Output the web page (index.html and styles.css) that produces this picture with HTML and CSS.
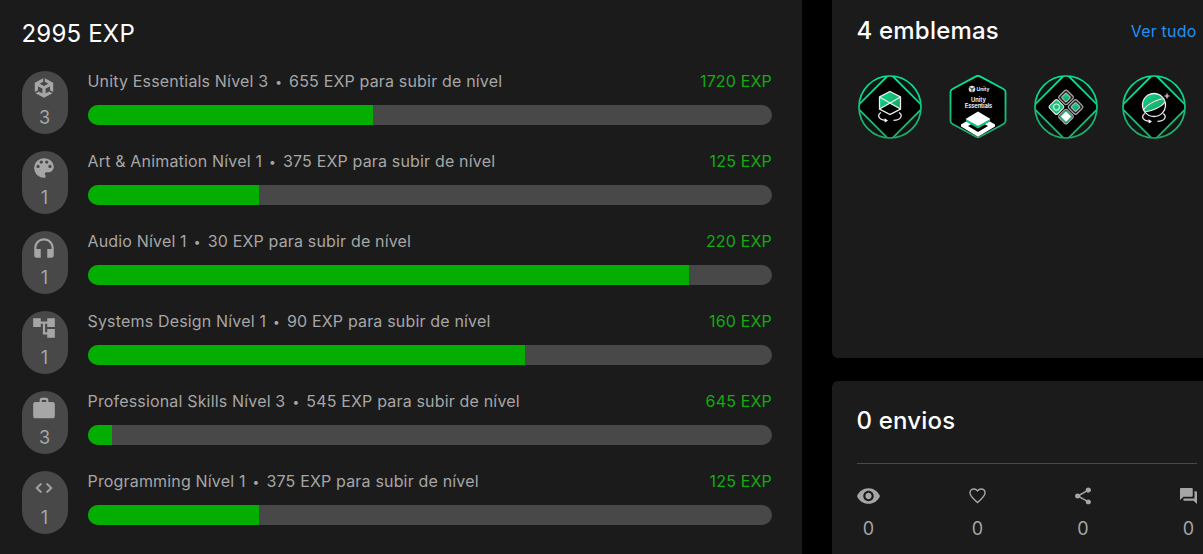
FILE: index.html
```html
<!DOCTYPE html>
<html lang="pt">
<head>
<meta charset="utf-8">
<title>EXP</title>
<link rel="stylesheet" href="styles.css">
</head>
<body>
<svg class="defs" width="0" height="0">
  <defs>
    <linearGradient id="ring" gradientUnits="userSpaceOnUse" x1="0" y1="0" x2="0" y2="64"><stop offset="0" stop-color="#00e896"/><stop offset="1" stop-color="#22a566"/></linearGradient>
    <linearGradient id="fill" x1="0" y1="0" x2="1" y2="1"><stop offset="0" stop-color="#06dc8c"/><stop offset="1" stop-color="#279258"/></linearGradient>
    <clipPath id="disc"><circle cx="32" cy="32" r="31"/></clipPath>
    <g id="frame">
      <circle cx="32" cy="32" r="31" fill="#131414"/>
      <g clip-path="url(#disc)"><path d="M32-1.500 65.500 32 32 65.500-1.500 32Z" fill="#000" stroke="url(#ring)" stroke-width="1.900"/></g>
      <circle cx="32" cy="32" r="31" fill="none" stroke="url(#ring)" stroke-width="1.700"/>
    </g>
    <g id="turn" fill="none" stroke="#e8e8e8" stroke-width="1.3">
      <path d="M23 37.500C19 40 20 44.500 27.500 45.400M41 37.500C45 40 43.500 45 35.500 45.400"/>
      <path d="M26.500 43.300 30 45.500 26.800 47.500Z" fill="#fff" stroke="none"/>
    </g>
    <path id="cube" d="m12.929 4.294 3.800 2.193c.137.077.142.290 0 .367l-4.515 2.608a.419.419 0 0 1-.425 0L7.274 6.854c-.139-.074-.141-.293 0-.367l3.797-2.193V0L1.376 5.598V16.793l3.718-2.146v-4.386c-.002-.156.181-.268.318-.184l4.515 2.608a.425.425 0 0 1 .214.368v5.213c.002.156-.181.268-.318.184l-3.800-2.193-3.718 2.146L12 24l9.695-5.598-3.718-2.146-3.800 2.193c-.134.082-.323-.025-.318-.184V13.053c0-.156.087-.296.214-.368l4.515-2.608c.134-.082.323.022.318.184v4.386l3.718 2.146V5.598L12.929 0Z"/>
  </defs>
</svg>
<main class="page">
  <section class="skills">
    <h2 class="total">2995 EXP</h2>
    <div class="skill">
      <div class="pill"><svg class="icon" viewBox="-3 -4 30 32" preserveAspectRatio="none"><use href="#cube"/></svg><span>3</span></div>
      <div class="info"><div class="line"><span>Unity Essentials Nível 3 <span class="dot">•</span> 655 EXP para subir de nível</span><span class="exp">1720 EXP</span></div><div class="track"><div class="bar" style="width:285px"></div></div></div>
    </div>
    <div class="skill">
      <div class="pill"><svg class="icon" viewBox="0 0 24 24"><path d="M12 3c-4.970 0-9 4.030-9 9s4.030 9 9 9c.83 0 1.500-.67 1.500-1.500 0-.39-.15-.74-.39-1.010-.23-.26-.38-.61-.38-.99 0-.83.67-1.500 1.500-1.500H16c2.760 0 5-2.240 5-5 0-4.420-4.030-8-9-8zm-5.500 9c-.83 0-1.500-.67-1.500-1.500S5.670 9 6.500 9 8 9.670 8 10.500 7.330 12 6.500 12zm3-4C8.670 8 8 7.330 8 6.500S8.670 5 9.500 5s1.500.67 1.500 1.500S10.330 8 9.500 8zm5 0c-.83 0-1.500-.67-1.500-1.500S13.670 5 14.500 5s1.500.67 1.500 1.500S15.330 8 14.500 8zm3 4c-.83 0-1.500-.67-1.500-1.500S16.670 9 17.500 9s1.500.67 1.500 1.500-.67 1.500-1.500 1.500z"/></svg><span>1</span></div>
      <div class="info"><div class="line"><span>Art &amp; Animation Nível 1 <span class="dot">•</span> 375 EXP para subir de nível</span><span class="exp">125 EXP</span></div><div class="track"><div class="bar" style="width:171px"></div></div></div>
    </div>
    <div class="skill">
      <div class="pill"><svg class="icon" viewBox="0 0 24 24"><path d="M12 3c-4.970 0-9 4.030-9 9v7c0 1.100.9 2 2 2h4v-8H5v-1c0-3.870 3.130-7 7-7s7 3.130 7 7v1h-4v8h4c1.100 0 2-.9 2-2v-7c0-4.970-4.030-9-9-9z"/></svg><span>1</span></div>
      <div class="info"><div class="line"><span>Audio Nível 1 <span class="dot">•</span> 30 EXP para subir de nível</span><span class="exp">220 EXP</span></div><div class="track"><div class="bar" style="width:601px"></div></div></div>
    </div>
    <div class="skill">
      <div class="pill"><svg class="icon" viewBox="0 0 24 24"><path d="M22 11V3h-7v3H9V3H2v8h7V8h2v10h4v3h7v-8h-7v3h-2V8h2v3z"/></svg><span>1</span></div>
      <div class="info"><div class="line"><span>Systems Design Nível 1 <span class="dot">•</span> 90 EXP para subir de nível</span><span class="exp">160 EXP</span></div><div class="track"><div class="bar" style="width:437px"></div></div></div>
    </div>
    <div class="skill">
      <div class="pill"><svg class="icon" viewBox="0 -.500 24 24"><path d="M20 6h-4V4c0-1.110-.89-2-2-2h-4c-1.110 0-2 .89-2 2v2H4c-1.110 0-1.990.89-1.990 2L2 19c0 1.110.89 2 2 2h16c1.110 0 2-.89 2-2V8c0-1.110-.89-2-2-2zm-6 0h-4V4h4v2z"/></svg><span>3</span></div>
      <div class="info"><div class="line"><span>Professional Skills Nível 3 <span class="dot">•</span> 545 EXP para subir de nível</span><span class="exp">645 EXP</span></div><div class="track"><div class="bar" style="width:24px"></div></div></div>
    </div>
    <div class="skill">
      <div class="pill"><svg class="icon" viewBox="-3.500 -3.500 31 31"><path d="M9.400 16.600 4.800 12l4.600-4.600L8 6l-6 6 6 6 1.400-1.400zm5.200 0 4.600-4.600-4.600-4.600L16 6l6 6-6 6-1.400-1.400z" stroke="#a6a6a6" stroke-width=".4"/></svg><span>1</span></div>
      <div class="info"><div class="line"><span>Programming Nível 1 <span class="dot">•</span> 375 EXP para subir de nível</span><span class="exp">125 EXP</span></div><div class="track"><div class="bar" style="width:171px"></div></div></div>
    </div>
  </section>
  <aside class="side">
    <section class="card badges-card">
      <header class="head"><h3>4 emblemas</h3><a class="all">Ver tudo</a></header>
      <div class="badges">
        <svg class="badge" viewBox="0 0 64 64"><use href="#frame"/><path d="M32 16.500 42.500 22V34L32 39.500 21.500 34V22Z" fill="url(#fill)"/><path d="M22 34 32 29 42 34 32 39Z" fill="#000"/><path d="M32 16.500 42.500 22V34L32 39.500 21.500 34V22ZM21.500 22 42.500 34M42.500 22 21.500 34" fill="none" stroke="#eee" stroke-width="1.300"/><use href="#turn"/></svg>
        <svg class="badge" viewBox="0 0 64 64"><path d="M32 .8Q33 .8 34 1.400L57.500 14Q59.500 15.200 59.500 17V46Q59.500 48 57.500 49L34 61.800Q32 62.800 30 61.800L6.500 49Q4.500 48 4.500 46V17Q4.500 15.200 6.500 14L30 1.400Q31 .8 32 .8Z" fill="#000" stroke="url(#ring)" stroke-width="1.800"/><path d="M15 49.500 21 46 32 52 43 46 49 49.500V51.500L32 61.800 15 51.500Z" fill="#fff"/><path d="M22 51 32 45.500 42 51 32 57Z" fill="#000"/><path d="M20 44 32 51 44 44V46.500L32 53.500 20 46.500Z" fill="#08c57d"/><path d="M32 36.500 44.500 44 32 51 19.500 44Z" fill="#fff"/><circle cx="26" cy="14" r="3.300" fill="#ddd"/><path d="M26 14V17M26 14 23.500 12.500M26 14 28.500 12.500" stroke="#000" stroke-width=".8"/><text x="30.500" y="15.900" class="mark">Unity</text><text x="32.500" y="27" class="name">Unity</text><text x="32.500" y="33.200" class="name" textLength="27.500">Essentials</text></svg>
        <svg class="badge" viewBox="0 0 64 64"><use href="#frame"/><g transform="translate(32 32) rotate(45)" stroke-width="1.200"><g fill="#222" stroke="#aaa"><rect x="-12.500" y="-12.500" width="11.500" height="11.500" rx="2"/><rect x="1" y="-12.500" width="11.500" height="11.500" rx="2"/><rect x="1" y="1" width="11.500" height="11.500" rx="2"/></g><rect x="-12.500" y="1" width="11.500" height="11.500" rx="2" fill="#1bc17c" stroke="#ddd"/><circle cx="-6.700" cy="6.700" r="3" fill="none" stroke="#d5f5e7"/><rect x="-10" y="-10" width="6.500" height="6.500" rx="1" fill="url(#fill)" stroke="#9bb"/><rect x="3.500" y="-10" width="6.500" height="6.500" rx="1" fill="url(#fill)" stroke="#9bb"/><rect x="2.500" y="2.500" width="8.500" height="8.500" rx="1" fill="#fff" stroke="#27bd7c"/></g></svg>
        <svg class="badge" viewBox="0 0 64 64"><use href="#frame"/><g><circle cx="32" cy="30" r="11.500" fill="#000"/><path d="M21.500 34.500A11.500 11.500 0 0 1 41.500 23.500C36 24 25 28 21.500 34.500Z" fill="url(#fill)"/><path d="M22.500 37C30 36.500 40 31.500 43 27L42 24.500C36 25 25.500 29.500 21.800 34.500Z" fill="url(#fill)"/><path d="M21.500 35C25 29 36 24 41.500 23.800M22.500 37C30 36.500 40 31.500 43 27" fill="none" stroke="#eee" stroke-width="1.200"/><circle cx="32" cy="30" r="11.500" fill="none" stroke="#eee" stroke-width="1.300"/></g><use href="#turn" y="1"/><path d="M45 18.500V23.500M42.500 21H47.500" stroke="#eee" stroke-width="1.100"/></svg>
      </div>
    </section>
    <section class="card sent-card">
      <h3 class="sent">0 envios</h3>
      <div class="stats">
        <div class="stat"><svg width="23" height="18" viewBox="1 3.400 22 17.200" preserveAspectRatio="none"><path d="M12 4.500C7 4.500 2.730 7.610 1 12c1.730 4.390 6 7.500 11 7.500s9.270-3.110 11-7.500c-1.730-4.390-6-7.500-11-7.500zM12 17c-2.760 0-5-2.240-5-5s2.240-5 5-5 5 2.240 5 5-2.240 5-5 5zm0-8c-1.660 0-3 1.340-3 3s1.340 3 3 3 3-1.340 3-3-1.340-3-3-3z"/></svg><span>0</span></div>
        <div class="stat"><svg width="17" height="18" viewBox="0 0 17 18"><path class="outline" d="M8.500 15.500 7.300 14.400C3.100 10.600 1 8.600 1 5.900 1 3.600 2.700 2 4.900 2c1.400 0 2.700.7 3.600 1.900C9.400 2.700 10.700 2 12.100 2 14.300 2 16 3.600 16 5.900c0 2.700-2.100 4.700-6.300 8.500Z"/></svg><span>0</span></div>
        <div class="stat"><svg width="16" height="18" viewBox="3 1.300 18 21.400" preserveAspectRatio="none"><path d="M18 16.080c-.76 0-1.440.3-1.960.77L8.910 12.700c.05-.23.09-.46.09-.7s-.04-.47-.09-.7l7.050-4.110c.54.5 1.250.81 2.040.81 1.660 0 3-1.340 3-3s-1.340-3-3-3-3 1.340-3 3c0 .24.04.47.09.7L8.040 9.810C7.500 9.310 6.790 9 6 9c-1.660 0-3 1.340-3 3s1.340 3 3 3c.79 0 1.500-.31 2.040-.81l7.120 4.160c-.05.21-.08.43-.08.65 0 1.610 1.310 2.920 2.920 2.920 1.610 0 2.920-1.310 2.920-2.920s-1.310-2.920-2.920-2.920z"/></svg><span>0</span></div>
        <div class="stat"><svg width="17" height="18" viewBox="2 .800 20 22.400" preserveAspectRatio="none"><path d="M21 6h-2v9H6v2c0 .55.45 1 1 1h11l4 4V7c0-.55-.45-1-1-1zm-4 6V3c0-.55-.45-1-1-1H3c-.55 0-1 .45-1 1v14l4-4h10c.55 0 1-.45 1-1z"/></svg><span>0</span></div>
      </div>
    </section>
  </aside>
</main>
</body>
</html>
```

FILE: styles.css
```css
* { box-sizing: border-box; }
body { margin: 0; background: #000; font-family: Inter, "Liberation Sans", sans-serif; color: #a6a6a6; overflow: hidden; }
h2, h3 { margin: 0; color: #fff; font-size: 24px; line-height: 30px; letter-spacing: .2px; }
h3 { font-weight: 500; margin-left: -.5px; }
.defs { display: block; height: 0; }
.page { display: flex; gap: 30px; height: 554px; overflow: hidden; }
.skills { width: 802px; flex: none; background: #1b1b1b; padding: 19px 30px 0 22px; }
.total { font-weight: 400; margin-bottom: 22px; margin-left: -.5px; }
.skill { display: flex; gap: 20px; height: 63px; margin-bottom: 17px; }
.pill { width: 46px; height: 63px; flex: none; border-radius: 23px; background: #484848; display: flex; flex-direction: column; align-items: center; padding: 4px 1px 0 0; font-size: 18px; line-height: 24px; }
.pill span { margin-top: 5px; }
.icon { width: 26px; height: 26px; flex: none; fill: #a6a6a6; margin-right: 1px; }
.info { flex: 1; }
.line { display: flex; justify-content: space-between; font-size: 16px; line-height: 20px; margin: 0 0 14px -.5px; white-space: nowrap; letter-spacing: .17px; }
.dot { display: inline-block; width: 11.500px; text-align: center; font-size: 12px; line-height: 16px; vertical-align: 1.500px; }
.exp { color: #10ad10; }
.track { height: 20px; border-radius: 10px; background: #484848; overflow: hidden; }
.bar { height: 20px; background: #04ae00; }
.side { width: 371px; flex: none; display: flex; flex-direction: column; gap: 23px; }
.card { background: #1b1b1b; padding-left: 25px; }
.badges-card { height: 358px; border-radius: 0 0 0 6px; padding-top: 16px; }
.head { display: flex; justify-content: space-between; align-items: center; padding-right: 6.500px; }
.all { color: #2091f9; font-size: 16px; letter-spacing: .2px; }
.badges { display: flex; gap: 24px; margin-top: 29px; }
.badge { width: 64px; height: 64px; flex: none; margin-left: 1px; margin-right: -1px; }
.mark { fill: #fff; font-size: 5px; font-weight: 600; }
.name { fill: #fff; font-size: 5.800px; font-weight: 600; text-anchor: middle; }
.sent-card { flex: 1; border-radius: 6px 0 0 0; padding: 25px 6px 0 25px; }
.stats { margin-top: 27px; border-top: 1px solid #484848; padding-top: 23px; display: flex; justify-content: space-between; }
.stat { display: flex; flex-direction: column; align-items: center; font-size: 18px; line-height: 24px; }
.stat svg { fill: #a6a6a6; margin-bottom: 12px; }
.outline { fill: none; stroke: #a6a6a6; stroke-width: 1.4; }
```
